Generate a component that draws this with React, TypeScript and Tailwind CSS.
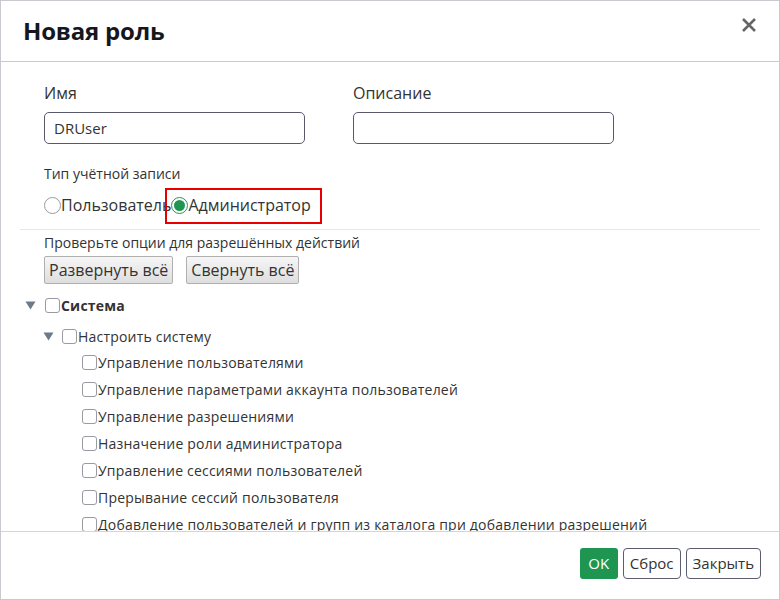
import React from "react";

const Tri = ({ className = "" }: { className?: string }) => (
  <svg width="11" height="9" viewBox="0 0 11 9" className={className}>
    <path d="M0.5 0.5 L10.5 0.5 L5.5 8.5 Z" fill="#6d7a88" />
  </svg>
);

const Box = () => (
  <span className="inline-block w-[15px] h-[15px] rounded-[3px] border border-[#9a9aa2] bg-white shrink-0" />
);

const children = [
  "Управление пользователями",
  "Управление параметрами аккаунта пользователей",
  "Управление разрешениями",
  "Назначение роли администратора",
  "Управление сессиями пользователей",
  "Прерывание сессий пользователя",
  "Добавление пользователей и групп из каталога при добавлении разрешений",
  "Управление группами",
];

export default function App() {
  return (
    <div className="w-[780px] h-[600px] bg-white border border-[#c9c9cf] flex flex-col font-['Open_Sans',sans-serif] text-[#333]">
      <div className="h-[61px] shrink-0 border-b border-[#c9c9cf] flex items-center justify-between pl-[22px] pr-[22px]">
        <div className="text-[24px] font-bold text-[#16161e] tracking-[-0.2px]">Новая роль</div>
        <svg width="16" height="16" viewBox="0 0 16 16" className="mt-[-12px]">
          <path d="M2 2 L14 14 M14 2 L2 14" stroke="#666" strokeWidth="2.6" />
        </svg>
      </div>
      <div className="flex-1 overflow-hidden px-[19px]">
        <div className="pl-[24px] pt-[20px] flex gap-[48px]">
          <div className="flex flex-col">
            <label className="text-[16px] leading-[22px] text-[#333]">Имя</label>
            <div className="mt-[8px] w-[261px] h-[32px] rounded-[5px] border border-[#585a6c] flex items-center px-[9px] text-[15px] text-[#333]">
              DRUser
            </div>
          </div>
          <div className="flex flex-col">
            <label className="text-[16px] leading-[22px] text-[#333]">Описание</label>
            <div className="mt-[8px] w-[261px] h-[32px] rounded-[5px] border border-[#585a6c]" />
          </div>
        </div>
        <div className="pl-[24px] mt-[20px] text-[14px] leading-[20px] text-[#333]">Тип учётной записи</div>
        <div className="pl-[24px] mt-[9px] flex items-center h-[24px] text-[16px] text-[#333]">
          <span className="inline-block w-[17px] h-[17px] rounded-full border border-[#9a9aa2] bg-white" />
          <span>Пользователь</span>
          <span className="relative flex items-center ml-[0px]">
            <span className="w-[17px] h-[17px] rounded-full border border-[#1e9651] flex items-center justify-center">
              <span className="w-[11px] h-[11px] rounded-full bg-[#1e9651]" />
            </span>
            <span>Администратор</span>
            <span className="absolute left-[-6px] right-[-11px] top-[-5px] bottom-[-7px] border-2 border-[#e80000]" />
          </span>
        </div>
        <div className="mt-[12px] border-t border-[#e2e8ef]" />
        <div className="pl-[24px] mt-[3px] text-[14px] leading-[20px] text-[#333]">Проверьте опции для разрешённых действий</div>
        <div className="pl-[24px] mt-[3px] flex gap-[13px]">
          <button className="h-[28px] px-[4px] text-[16px] text-[#333] border border-[#b0b0b0] rounded-[2px] bg-gradient-to-b from-[#f6f6f6] to-[#dedede]">
            Развернуть всё
          </button>
          <button className="h-[28px] px-[4px] text-[16px] text-[#333] border border-[#b0b0b0] rounded-[2px] bg-gradient-to-b from-[#f6f6f6] to-[#dedede]">
            Свернуть всё
          </button>
        </div>
        <div className="mt-[10px] flex items-center h-[22px] pl-[5px]">
          <Tri />
          <span className="ml-[9px] flex"><Box /></span>
          <span className="text-[14px] font-bold text-[#333] ml-[1px] tracking-[0.2px]">Система</span>
        </div>
        <div className="mt-[9px] flex items-center h-[22px] pl-[23px]">
          <Tri />
          <span className="ml-[8px] flex"><Box /></span>
          <span className="text-[14px] text-[#333] ml-[1px] tracking-[0.2px]">Настроить систему</span>
        </div>
        <div className="flex flex-col pl-[62px] mt-[4px] gap-[5px]">
          {children.map((c) => (
            <div key={c} className="flex items-center h-[22px] whitespace-nowrap">
              <Box />
              <span className="text-[14px] text-[#333] ml-[1px] tracking-[0.2px]">{c}</span>
            </div>
          ))}
        </div>
      </div>
      <div className="h-[68px] shrink-0 border-t border-[#d4d4d8] flex items-start justify-end gap-[5px] pr-[18px] pt-[16px]">
        <button className="h-[31px] w-[38px] rounded-[3px] bg-[#1e9651] text-white text-[15px]">OK</button>
        <button className="h-[31px] px-[6px] rounded-[4px] border-[1.5px] border-[#5c5e70] bg-white text-[#333] text-[15px]">Сброс</button>
        <button className="h-[31px] px-[6px] rounded-[4px] border-[1.5px] border-[#5c5e70] bg-white text-[#333] text-[15px]">Закрыть</button>
      </div>
    </div>
  );
}
